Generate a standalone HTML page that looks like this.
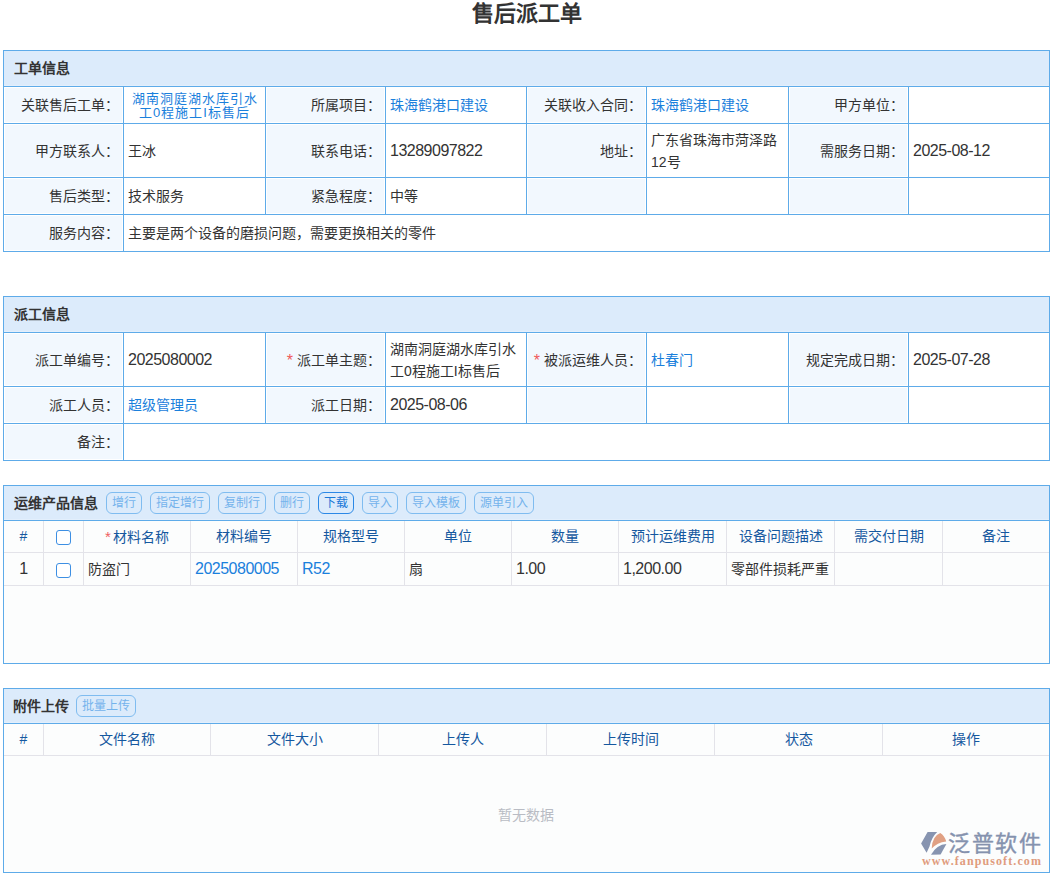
<!DOCTYPE html>
<html lang="zh-CN"><head><meta charset="utf-8"><style>
html,body{margin:0;padding:0;background:#fff;}
body{width:1051px;height:876px;position:relative;overflow:hidden;font-family:"Liberation Sans",sans-serif;}
body>div{position:absolute;box-sizing:border-box;}
.t{white-space:nowrap;overflow:visible;}
.n{font-size:16px;letter-spacing:-0.5px;}
.f{display:flex;align-items:center;}
.btn{position:absolute;border:1px solid;border-radius:6px;font-size:12px;line-height:21px;text-align:center;box-sizing:border-box;}
.cb{position:absolute;width:15px;height:15px;border:1.5px solid #3d8fe3;border-radius:3px;box-sizing:border-box;background:#fff;}
</style></head><body>
<div class="t" style="left:0px;top:1px;width:1051px;height:26px;line-height:26px;text-align:center;color:#333;font-size:22px;font-weight:bold;left:1px;">售后派工单</div><div style="left:3px;top:50px;width:1047px;height:202px;background:#5eabe9;"></div><div style="left:4px;top:51px;width:1045px;height:35px;background:#dcebfb;"></div><div style="left:4px;top:85px;width:1045px;height:1px;background:#e3effc;"></div><div style="left:3px;top:86px;width:1047px;height:1px;background:#5eabe9;"></div><div style="left:4px;top:87px;width:1045px;height:164px;background:#ffffff;"></div><div class="t" style="left:14px;top:51px;width:200px;height:35px;line-height:35px;text-align:left;color:#333333;font-size:14px;font-weight:bold;">工单信息</div><div style="left:3px;top:123px;width:1047px;height:1px;background:#5eabe9;"></div><div style="left:5px;top:88px;width:117px;height:34px;background:#f2f8fe;"></div><div class="t f" style="left:4px;top:87px;width:119px;height:36px;justify-content:flex-end;color:#333333;font-size:14px;padding-right:4px;box-sizing:border-box;"><span style="line-height:22px;text-align:right;display:block">关联售后工单：</span></div><div style="left:123px;top:86px;width:1px;height:38px;background:#5eabe9;"></div><div class="t f" style="left:124px;top:87px;width:141px;height:36px;justify-content:flex-start;color:#333333;font-size:14px;padding-left:4px;box-sizing:border-box;"><span style="line-height:22px;text-align:left;display:block"></span></div><div style="left:265px;top:86px;width:1px;height:38px;background:#5eabe9;"></div><div style="left:267px;top:88px;width:117px;height:34px;background:#f2f8fe;"></div><div class="t f" style="left:266px;top:87px;width:119px;height:36px;justify-content:flex-end;color:#333333;font-size:14px;padding-right:4px;box-sizing:border-box;"><span style="line-height:22px;text-align:right;display:block">所属项目：</span></div><div style="left:385px;top:86px;width:1px;height:38px;background:#5eabe9;"></div><div class="t f" style="left:386px;top:87px;width:140px;height:36px;justify-content:flex-start;color:#333333;font-size:14px;padding-left:4px;box-sizing:border-box;"><span style="line-height:22px;text-align:left;display:block"><span style="color:#1a80dc">珠海鹤港口建设</span></span></div><div style="left:526px;top:86px;width:1px;height:38px;background:#5eabe9;"></div><div style="left:528px;top:88px;width:117px;height:34px;background:#f2f8fe;"></div><div class="t f" style="left:527px;top:87px;width:119px;height:36px;justify-content:flex-end;color:#333333;font-size:14px;padding-right:4px;box-sizing:border-box;"><span style="line-height:22px;text-align:right;display:block">关联收入合同：</span></div><div style="left:646px;top:86px;width:1px;height:38px;background:#5eabe9;"></div><div class="t f" style="left:647px;top:87px;width:141px;height:36px;justify-content:flex-start;color:#333333;font-size:14px;padding-left:4px;box-sizing:border-box;"><span style="line-height:22px;text-align:left;display:block"><span style="color:#1a80dc">珠海鹤港口建设</span></span></div><div style="left:788px;top:86px;width:1px;height:38px;background:#5eabe9;"></div><div style="left:790px;top:88px;width:117px;height:34px;background:#f2f8fe;"></div><div class="t f" style="left:789px;top:87px;width:119px;height:36px;justify-content:flex-end;color:#333333;font-size:14px;padding-right:4px;box-sizing:border-box;"><span style="line-height:22px;text-align:right;display:block">甲方单位：</span></div><div style="left:908px;top:86px;width:1px;height:38px;background:#5eabe9;"></div><div style="left:3px;top:177px;width:1047px;height:1px;background:#5eabe9;"></div><div style="left:5px;top:125px;width:117px;height:51px;background:#f2f8fe;"></div><div class="t f" style="left:4px;top:124px;width:119px;height:53px;justify-content:flex-end;color:#333333;font-size:14px;padding-right:4px;box-sizing:border-box;"><span style="line-height:22px;text-align:right;display:block">甲方联系人：</span></div><div style="left:123px;top:123px;width:1px;height:55px;background:#5eabe9;"></div><div class="t f" style="left:124px;top:124px;width:141px;height:53px;justify-content:flex-start;color:#333333;font-size:14px;padding-left:4px;box-sizing:border-box;"><span style="line-height:22px;text-align:left;display:block">王冰</span></div><div style="left:265px;top:123px;width:1px;height:55px;background:#5eabe9;"></div><div style="left:267px;top:125px;width:117px;height:51px;background:#f2f8fe;"></div><div class="t f" style="left:266px;top:124px;width:119px;height:53px;justify-content:flex-end;color:#333333;font-size:14px;padding-right:4px;box-sizing:border-box;"><span style="line-height:22px;text-align:right;display:block">联系电话：</span></div><div style="left:385px;top:123px;width:1px;height:55px;background:#5eabe9;"></div><div class="t f" style="left:386px;top:124px;width:140px;height:53px;justify-content:flex-start;color:#333333;font-size:14px;padding-left:4px;box-sizing:border-box;"><span style="line-height:22px;text-align:left;display:block"><span class="n">13289097822</span></span></div><div style="left:526px;top:123px;width:1px;height:55px;background:#5eabe9;"></div><div style="left:528px;top:125px;width:117px;height:51px;background:#f2f8fe;"></div><div class="t f" style="left:527px;top:124px;width:119px;height:53px;justify-content:flex-end;color:#333333;font-size:14px;padding-right:4px;box-sizing:border-box;"><span style="line-height:22px;text-align:right;display:block">地址：</span></div><div style="left:646px;top:123px;width:1px;height:55px;background:#5eabe9;"></div><div class="t f" style="left:647px;top:124px;width:141px;height:53px;justify-content:flex-start;color:#333333;font-size:14px;padding-left:4px;box-sizing:border-box;"><span style="line-height:22px;text-align:left;display:block">广东省珠海市菏泽路<br>12号</span></div><div style="left:788px;top:123px;width:1px;height:55px;background:#5eabe9;"></div><div style="left:790px;top:125px;width:117px;height:51px;background:#f2f8fe;"></div><div class="t f" style="left:789px;top:124px;width:119px;height:53px;justify-content:flex-end;color:#333333;font-size:14px;padding-right:4px;box-sizing:border-box;"><span style="line-height:22px;text-align:right;display:block">需服务日期：</span></div><div style="left:908px;top:123px;width:1px;height:55px;background:#5eabe9;"></div><div class="t f" style="left:909px;top:124px;width:140px;height:53px;justify-content:flex-start;color:#333333;font-size:14px;padding-left:4px;box-sizing:border-box;"><span style="line-height:22px;text-align:left;display:block"><span class="n">2025-08-12</span></span></div><div style="left:3px;top:214px;width:1047px;height:1px;background:#5eabe9;"></div><div style="left:5px;top:179px;width:117px;height:34px;background:#f2f8fe;"></div><div class="t f" style="left:4px;top:178px;width:119px;height:36px;justify-content:flex-end;color:#333333;font-size:14px;padding-right:4px;box-sizing:border-box;"><span style="line-height:22px;text-align:right;display:block">售后类型：</span></div><div style="left:123px;top:177px;width:1px;height:38px;background:#5eabe9;"></div><div class="t f" style="left:124px;top:178px;width:141px;height:36px;justify-content:flex-start;color:#333333;font-size:14px;padding-left:4px;box-sizing:border-box;"><span style="line-height:22px;text-align:left;display:block">技术服务</span></div><div style="left:265px;top:177px;width:1px;height:38px;background:#5eabe9;"></div><div style="left:267px;top:179px;width:117px;height:34px;background:#f2f8fe;"></div><div class="t f" style="left:266px;top:178px;width:119px;height:36px;justify-content:flex-end;color:#333333;font-size:14px;padding-right:4px;box-sizing:border-box;"><span style="line-height:22px;text-align:right;display:block">紧急程度：</span></div><div style="left:385px;top:177px;width:1px;height:38px;background:#5eabe9;"></div><div class="t f" style="left:386px;top:178px;width:140px;height:36px;justify-content:flex-start;color:#333333;font-size:14px;padding-left:4px;box-sizing:border-box;"><span style="line-height:22px;text-align:left;display:block">中等</span></div><div style="left:526px;top:177px;width:1px;height:38px;background:#5eabe9;"></div><div style="left:528px;top:179px;width:117px;height:34px;background:#f2f8fe;"></div><div style="left:646px;top:177px;width:1px;height:38px;background:#5eabe9;"></div><div style="left:788px;top:177px;width:1px;height:38px;background:#5eabe9;"></div><div style="left:790px;top:179px;width:117px;height:34px;background:#f2f8fe;"></div><div style="left:908px;top:177px;width:1px;height:38px;background:#5eabe9;"></div><div style="left:3px;top:251px;width:1047px;height:1px;background:#5eabe9;"></div><div style="left:5px;top:216px;width:117px;height:34px;background:#f2f8fe;"></div><div class="t f" style="left:4px;top:215px;width:119px;height:36px;justify-content:flex-end;color:#333333;font-size:14px;padding-right:4px;box-sizing:border-box;"><span style="line-height:22px;text-align:right;display:block">服务内容：</span></div><div style="left:123px;top:214px;width:1px;height:38px;background:#5eabe9;"></div><div class="t f" style="left:124px;top:215px;width:925px;height:36px;justify-content:flex-start;color:#333333;font-size:14px;padding-left:4px;box-sizing:border-box;"><span style="line-height:22px;text-align:left;display:block">主要是两个设备的磨损问题，需要更换相关的零件</span></div><div style="left:3px;top:296px;width:1047px;height:165px;background:#5eabe9;"></div><div style="left:4px;top:297px;width:1045px;height:35px;background:#dcebfb;"></div><div style="left:4px;top:331px;width:1045px;height:1px;background:#e3effc;"></div><div style="left:3px;top:332px;width:1047px;height:1px;background:#5eabe9;"></div><div style="left:4px;top:333px;width:1045px;height:127px;background:#ffffff;"></div><div class="t" style="left:14px;top:297px;width:200px;height:35px;line-height:35px;text-align:left;color:#333333;font-size:14px;font-weight:bold;">派工信息</div><div style="left:3px;top:386px;width:1047px;height:1px;background:#5eabe9;"></div><div style="left:5px;top:334px;width:117px;height:51px;background:#f2f8fe;"></div><div class="t f" style="left:4px;top:333px;width:119px;height:53px;justify-content:flex-end;color:#333333;font-size:14px;padding-right:4px;box-sizing:border-box;"><span style="line-height:22px;text-align:right;display:block">派工单编号：</span></div><div style="left:123px;top:332px;width:1px;height:55px;background:#5eabe9;"></div><div class="t f" style="left:124px;top:333px;width:141px;height:53px;justify-content:flex-start;color:#333333;font-size:14px;padding-left:4px;box-sizing:border-box;"><span style="line-height:22px;text-align:left;display:block"><span class="n">2025080002</span></span></div><div style="left:265px;top:332px;width:1px;height:55px;background:#5eabe9;"></div><div style="left:267px;top:334px;width:117px;height:51px;background:#f2f8fe;"></div><div class="t f" style="left:266px;top:333px;width:119px;height:53px;justify-content:flex-end;color:#333333;font-size:14px;padding-right:4px;box-sizing:border-box;"><span style="line-height:22px;text-align:right;display:block"><span style="color:#f05a5a;font-size:16px;margin-right:4px;position:relative;top:1px">*</span>派工单主题：</span></div><div style="left:385px;top:332px;width:1px;height:55px;background:#5eabe9;"></div><div class="t f" style="left:386px;top:333px;width:140px;height:53px;justify-content:flex-start;color:#333333;font-size:14px;padding-left:4px;box-sizing:border-box;"><span style="line-height:22px;text-align:left;display:block">湖南洞庭湖水库引水<br>工0程施工I标售后</span></div><div style="left:526px;top:332px;width:1px;height:55px;background:#5eabe9;"></div><div style="left:528px;top:334px;width:117px;height:51px;background:#f2f8fe;"></div><div class="t f" style="left:527px;top:333px;width:119px;height:53px;justify-content:flex-end;color:#333333;font-size:14px;padding-right:4px;box-sizing:border-box;"><span style="line-height:22px;text-align:right;display:block"><span style="color:#f05a5a;font-size:16px;margin-right:4px;position:relative;top:1px">*</span>被派运维人员：</span></div><div style="left:646px;top:332px;width:1px;height:55px;background:#5eabe9;"></div><div class="t f" style="left:647px;top:333px;width:141px;height:53px;justify-content:flex-start;color:#333333;font-size:14px;padding-left:4px;box-sizing:border-box;"><span style="line-height:22px;text-align:left;display:block"><span style="color:#1a80dc">杜春门</span></span></div><div style="left:788px;top:332px;width:1px;height:55px;background:#5eabe9;"></div><div style="left:790px;top:334px;width:117px;height:51px;background:#f2f8fe;"></div><div class="t f" style="left:789px;top:333px;width:119px;height:53px;justify-content:flex-end;color:#333333;font-size:14px;padding-right:4px;box-sizing:border-box;"><span style="line-height:22px;text-align:right;display:block">规定完成日期：</span></div><div style="left:908px;top:332px;width:1px;height:55px;background:#5eabe9;"></div><div class="t f" style="left:909px;top:333px;width:140px;height:53px;justify-content:flex-start;color:#333333;font-size:14px;padding-left:4px;box-sizing:border-box;"><span style="line-height:22px;text-align:left;display:block"><span class="n">2025-07-28</span></span></div><div style="left:3px;top:423px;width:1047px;height:1px;background:#5eabe9;"></div><div style="left:5px;top:388px;width:117px;height:34px;background:#f2f8fe;"></div><div class="t f" style="left:4px;top:387px;width:119px;height:36px;justify-content:flex-end;color:#333333;font-size:14px;padding-right:4px;box-sizing:border-box;"><span style="line-height:22px;text-align:right;display:block">派工人员：</span></div><div style="left:123px;top:386px;width:1px;height:38px;background:#5eabe9;"></div><div class="t f" style="left:124px;top:387px;width:141px;height:36px;justify-content:flex-start;color:#333333;font-size:14px;padding-left:4px;box-sizing:border-box;"><span style="line-height:22px;text-align:left;display:block"><span style="color:#1a80dc">超级管理员</span></span></div><div style="left:265px;top:386px;width:1px;height:38px;background:#5eabe9;"></div><div style="left:267px;top:388px;width:117px;height:34px;background:#f2f8fe;"></div><div class="t f" style="left:266px;top:387px;width:119px;height:36px;justify-content:flex-end;color:#333333;font-size:14px;padding-right:4px;box-sizing:border-box;"><span style="line-height:22px;text-align:right;display:block">派工日期：</span></div><div style="left:385px;top:386px;width:1px;height:38px;background:#5eabe9;"></div><div class="t f" style="left:386px;top:387px;width:140px;height:36px;justify-content:flex-start;color:#333333;font-size:14px;padding-left:4px;box-sizing:border-box;"><span style="line-height:22px;text-align:left;display:block"><span class="n">2025-08-06</span></span></div><div style="left:526px;top:386px;width:1px;height:38px;background:#5eabe9;"></div><div style="left:528px;top:388px;width:117px;height:34px;background:#f2f8fe;"></div><div style="left:646px;top:386px;width:1px;height:38px;background:#5eabe9;"></div><div style="left:788px;top:386px;width:1px;height:38px;background:#5eabe9;"></div><div style="left:790px;top:388px;width:117px;height:34px;background:#f2f8fe;"></div><div style="left:908px;top:386px;width:1px;height:38px;background:#5eabe9;"></div><div style="left:3px;top:460px;width:1047px;height:1px;background:#5eabe9;"></div><div style="left:5px;top:425px;width:117px;height:34px;background:#f2f8fe;"></div><div class="t f" style="left:4px;top:424px;width:119px;height:36px;justify-content:flex-end;color:#333333;font-size:14px;padding-right:4px;box-sizing:border-box;"><span style="line-height:22px;text-align:right;display:block">备注：</span></div><div style="left:123px;top:423px;width:1px;height:38px;background:#5eabe9;"></div><div class="t" style="left:124px;top:92px;width:141px;height:30px;text-align:center;color:#1a80dc;font-size:13px;line-height:14px;letter-spacing:1px;text-indent:1px;">湖南洞庭湖水库引水<br>工0程施工I标售后</div><div style="left:3px;top:485px;width:1047px;height:179px;background:#5eabe9;"></div><div style="left:4px;top:486px;width:1045px;height:34px;background:#dcebfb;"></div><div style="left:4px;top:519px;width:1045px;height:1px;background:#e3effc;"></div><div style="left:3px;top:520px;width:1047px;height:1px;background:#5eabe9;"></div><div style="left:4px;top:521px;width:1045px;height:142px;background:#fcfdfd;"></div><div class="t" style="left:14px;top:486px;width:100px;height:34px;line-height:34px;text-align:left;color:#333333;font-size:14px;font-weight:bold;">运维产品信息</div><div class="btn" style="left:106px;top:492px;width:36px;height:22px;border-color:#7fbcf0;color:#74b3ec;">增行</div><div class="btn" style="left:150px;top:492px;width:60px;height:22px;border-color:#7fbcf0;color:#74b3ec;">指定增行</div><div class="btn" style="left:218px;top:492px;width:48px;height:22px;border-color:#7fbcf0;color:#74b3ec;">复制行</div><div class="btn" style="left:274px;top:492px;width:36px;height:22px;border-color:#7fbcf0;color:#74b3ec;">删行</div><div class="btn" style="left:318px;top:492px;width:36px;height:22px;border-color:#2b88e6;color:#1a78d8;">下载</div><div class="btn" style="left:362px;top:492px;width:36px;height:22px;border-color:#7fbcf0;color:#74b3ec;">导入</div><div class="btn" style="left:406px;top:492px;width:60px;height:22px;border-color:#7fbcf0;color:#74b3ec;">导入模板</div><div class="btn" style="left:474px;top:492px;width:60px;height:22px;border-color:#7fbcf0;color:#74b3ec;">源单引入</div><div style="left:4px;top:552px;width:1045px;height:1px;background:#e3e3e9;"></div><div style="left:4px;top:585px;width:1045px;height:1px;background:#e3e3e9;"></div><div style="left:43px;top:521px;width:1px;height:65px;background:#e3e3e9;"></div><div style="left:83px;top:521px;width:1px;height:65px;background:#e3e3e9;"></div><div style="left:190px;top:521px;width:1px;height:65px;background:#e3e3e9;"></div><div style="left:297px;top:521px;width:1px;height:65px;background:#e3e3e9;"></div><div style="left:404px;top:521px;width:1px;height:65px;background:#e3e3e9;"></div><div style="left:511px;top:521px;width:1px;height:65px;background:#e3e3e9;"></div><div style="left:618px;top:521px;width:1px;height:65px;background:#e3e3e9;"></div><div style="left:726px;top:521px;width:1px;height:65px;background:#e3e3e9;"></div><div style="left:834px;top:521px;width:1px;height:65px;background:#e3e3e9;"></div><div style="left:942px;top:521px;width:1px;height:65px;background:#e3e3e9;"></div><div class="t" style="left:4px;top:521px;width:39px;height:31px;line-height:31px;text-align:center;color:#15589f;font-size:14px;font-weight:normal;">#</div><div class="t" style="left:4px;top:553px;width:39px;height:32px;line-height:32px;text-align:center;color:#333333;font-size:14px;font-weight:normal;"><span class="n">1</span></div><div class="cb" style="left:56px;top:530px;"></div><div class="cb" style="left:56px;top:563px;"></div><div class="t" style="left:84px;top:521px;width:106px;height:31px;line-height:31px;text-align:center;color:#15589f;font-size:14px;font-weight:normal;"><span style="color:#f06060;font-size:15px;margin-right:2px">*</span>材料名称</div><div class="t" style="left:88px;top:553px;width:102px;height:32px;line-height:32px;text-align:left;color:#333333;font-size:14px;font-weight:normal;white-space:nowrap;">防盗门</div><div class="t" style="left:191px;top:521px;width:106px;height:31px;line-height:31px;text-align:center;color:#15589f;font-size:14px;font-weight:normal;">材料编号</div><div class="t" style="left:195px;top:553px;width:102px;height:32px;line-height:32px;text-align:left;color:#333333;font-size:14px;font-weight:normal;white-space:nowrap;"><span style="color:#1a80dc"><span class="n">2025080005</span></span></div><div class="t" style="left:298px;top:521px;width:106px;height:31px;line-height:31px;text-align:center;color:#15589f;font-size:14px;font-weight:normal;">规格型号</div><div class="t" style="left:302px;top:553px;width:102px;height:32px;line-height:32px;text-align:left;color:#333333;font-size:14px;font-weight:normal;white-space:nowrap;"><span style="color:#1a80dc"><span class="n">R52</span></span></div><div class="t" style="left:405px;top:521px;width:106px;height:31px;line-height:31px;text-align:center;color:#15589f;font-size:14px;font-weight:normal;">单位</div><div class="t" style="left:409px;top:553px;width:102px;height:32px;line-height:32px;text-align:left;color:#333333;font-size:14px;font-weight:normal;white-space:nowrap;">扇</div><div class="t" style="left:512px;top:521px;width:106px;height:31px;line-height:31px;text-align:center;color:#15589f;font-size:14px;font-weight:normal;">数量</div><div class="t" style="left:516px;top:553px;width:102px;height:32px;line-height:32px;text-align:left;color:#333333;font-size:14px;font-weight:normal;white-space:nowrap;"><span class="n">1.00</span></div><div class="t" style="left:619px;top:521px;width:107px;height:31px;line-height:31px;text-align:center;color:#15589f;font-size:14px;font-weight:normal;">预计运维费用</div><div class="t" style="left:623px;top:553px;width:103px;height:32px;line-height:32px;text-align:left;color:#333333;font-size:14px;font-weight:normal;white-space:nowrap;"><span class="n">1,200.00</span></div><div class="t" style="left:727px;top:521px;width:107px;height:31px;line-height:31px;text-align:center;color:#15589f;font-size:14px;font-weight:normal;">设备问题描述</div><div class="t" style="left:731px;top:553px;width:103px;height:32px;line-height:32px;text-align:left;color:#333333;font-size:14px;font-weight:normal;white-space:nowrap;">零部件损耗严重</div><div class="t" style="left:835px;top:521px;width:107px;height:31px;line-height:31px;text-align:center;color:#15589f;font-size:14px;font-weight:normal;">需交付日期</div><div class="t" style="left:839px;top:553px;width:103px;height:32px;line-height:32px;text-align:left;color:#333333;font-size:14px;font-weight:normal;white-space:nowrap;"></div><div class="t" style="left:943px;top:521px;width:106px;height:31px;line-height:31px;text-align:center;color:#15589f;font-size:14px;font-weight:normal;">备注</div><div class="t" style="left:947px;top:553px;width:102px;height:32px;line-height:32px;text-align:left;color:#333333;font-size:14px;font-weight:normal;white-space:nowrap;"></div><div style="left:3px;top:688px;width:1047px;height:185px;background:#5eabe9;"></div><div style="left:4px;top:689px;width:1045px;height:34px;background:#dcebfb;"></div><div style="left:4px;top:722px;width:1045px;height:1px;background:#e3effc;"></div><div style="left:3px;top:723px;width:1047px;height:1px;background:#5eabe9;"></div><div style="left:4px;top:724px;width:1045px;height:148px;background:#fcfdfd;"></div><div class="t" style="left:13px;top:689px;width:100px;height:34px;line-height:34px;text-align:left;color:#333333;font-size:14px;font-weight:bold;">附件上传</div><div class="btn" style="left:76px;top:695px;width:60px;height:22px;border-color:#7fbcf0;color:#74b3ec;">批量上传</div><div style="left:4px;top:755px;width:1045px;height:1px;background:#e3e3e9;"></div><div style="left:43px;top:724px;width:1px;height:32px;background:#e3e3e9;"></div><div style="left:210px;top:724px;width:1px;height:32px;background:#e3e3e9;"></div><div style="left:378px;top:724px;width:1px;height:32px;background:#e3e3e9;"></div><div style="left:546px;top:724px;width:1px;height:32px;background:#e3e3e9;"></div><div style="left:714px;top:724px;width:1px;height:32px;background:#e3e3e9;"></div><div style="left:882px;top:724px;width:1px;height:32px;background:#e3e3e9;"></div><div class="t" style="left:4px;top:724px;width:39px;height:31px;line-height:31px;text-align:center;color:#15589f;font-size:14px;font-weight:normal;">#</div><div class="t" style="left:44px;top:724px;width:166px;height:31px;line-height:31px;text-align:center;color:#15589f;font-size:14px;font-weight:normal;">文件名称</div><div class="t" style="left:211px;top:724px;width:167px;height:31px;line-height:31px;text-align:center;color:#15589f;font-size:14px;font-weight:normal;">文件大小</div><div class="t" style="left:379px;top:724px;width:167px;height:31px;line-height:31px;text-align:center;color:#15589f;font-size:14px;font-weight:normal;">上传人</div><div class="t" style="left:547px;top:724px;width:167px;height:31px;line-height:31px;text-align:center;color:#15589f;font-size:14px;font-weight:normal;">上传时间</div><div class="t" style="left:715px;top:724px;width:167px;height:31px;line-height:31px;text-align:center;color:#15589f;font-size:14px;font-weight:normal;">状态</div><div class="t" style="left:883px;top:724px;width:166px;height:31px;line-height:31px;text-align:center;color:#15589f;font-size:14px;font-weight:normal;">操作</div><div class="t" style="left:3px;top:801px;width:1046px;height:28px;line-height:28px;text-align:center;color:#b9bcc4;font-size:14px;font-weight:normal;">暂无数据</div><svg style="position:absolute;left:918px;top:828px" width="32" height="30" viewBox="0 0 32 30">
<path d="M9.6 4.1 L19.2 4.1 Q13.5 9.5 11.5 18.5 L8.6 24.7 L3.1 15.4 Z" fill="#8794b0"/>
<path d="M13.7 20.5 Q14.2 8.2 22.3 5.1 Q26.6 8 28.2 13.4 Q19 14.5 13.7 20.5 Z" fill="#e0a083"/>
<path d="M13 26.7 L22.6 26.4 L28.4 16.1 Q19 16.6 13 26.7 Z" fill="#8794b0"/>
</svg><div class="t" style="left:948px;top:830px;width:100px;height:28px;line-height:28px;text-align:left;color:#8592ae;font-size:22px;font-weight:500;letter-spacing:1.5px;-webkit-text-stroke:0.4px #8592ae;">泛普软件</div><div class="t" style="left:922px;top:855px;width:125px;height:12px;line-height:12px;text-align:left;color:#e09c7e;font-size:12px;font-weight:bold;font-family:'Liberation Serif',serif;letter-spacing:1.1px;">www.fanpusoft.com</div>
</body></html>
